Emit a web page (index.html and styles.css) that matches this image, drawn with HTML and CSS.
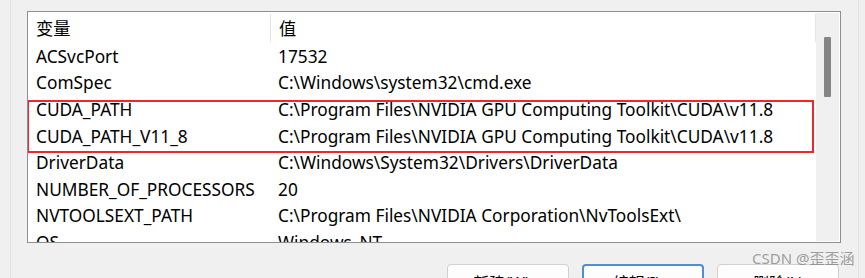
FILE: index.html
```html
<!DOCTYPE html>
<html>
<head>
    <title>环境变量</title>
    <link rel="stylesheet" href="styles.css">
</head>
<body>
    <div class="frame">
        <div class="listbox">
            <div class="table">
                <div class="header">
                    <div class="cell name">变量</div>
                    <div class="cell value">值</div>
                </div>
                <div class="row"><div class="cell name">ACSvcPort</div><div class="cell value">17532</div></div>
                <div class="row"><div class="cell name">ComSpec</div><div class="cell value">C:\Windows\system32\cmd.exe</div></div>
                <div class="row"><div class="cell name">CUDA_PATH</div><div class="cell value">C:\Program Files\NVIDIA GPU Computing Toolkit\CUDA\v11.8</div></div>
                <div class="row"><div class="cell name">CUDA_PATH_V11_8</div><div class="cell value">C:\Program Files\NVIDIA GPU Computing Toolkit\CUDA\v11.8</div></div>
                <div class="row"><div class="cell name">DriverData</div><div class="cell value">C:\Windows\System32\Drivers\DriverData</div></div>
                <div class="row"><div class="cell name">NUMBER_OF_PROCESSORS</div><div class="cell value">20</div></div>
                <div class="row"><div class="cell name">NVTOOLSEXT_PATH</div><div class="cell value">C:\Program Files\NVIDIA Corporation\NvToolsExt\</div></div>
                <div class="row"><div class="cell name">OS</div><div class="cell value">Windows_NT</div></div>
                <div class="highlight"></div>
            </div>
            <div class="scrollbar">
                <div class="thumb"></div>
            </div>
        </div>
        <div class="buttons">
            <button>新建(W)...</button>
            <button class="focused">编辑(I)...</button>
            <button>删除(L)</button>
        </div>
    </div>
    <div class="watermark">CSDN @歪歪涵</div>
</body>
</html>
```

FILE: styles.css
```css
body {
    margin: 0;
    height: 278px;
    overflow: hidden;
    background: #f0f0f0;
    font-family: 'Noto Sans', 'Noto Sans CJK SC', sans-serif;
    font-size: 17.3px;
    color: #000;
    position: relative;
}

.frame {
    margin-left: 10px;
    width: 849px;
    height: 278px;
    border-left: 1px solid #e2e2e2;
    border-right: 1px solid #e2e2e2;
    padding-left: 16px;
    padding-top: 11px;
    box-sizing: border-box;
    overflow: hidden;
}

.listbox {
    width: 814px;
    height: 232px;
    box-sizing: border-box;
    border: 1px solid #8c8f94;
    background: #fff;
    display: flex;
    overflow: hidden;
}

.table {
    flex: 1;
    position: relative;
    overflow: hidden;
}

.header, .row {
    display: grid;
    grid-template-columns: 242px 1fr;
    align-items: center;
    white-space: nowrap;
}

.header {
    height: 31px;
}

.header .value {
    height: 28px;
    border-left: 1px solid #e5e5e5;
    border-right: 1px solid #e5e5e5;
    display: flex;
    align-items: center;
}

.row {
    height: 26.6px;
}

.cell.name {
    padding-left: 8px;
}

.cell.value {
    padding-left: 8px;
}

.highlight {
    position: absolute;
    left: -1px;
    top: 88px;
    width: 783px;
    height: 49px;
    border: 2px solid #f0262b;
}

.scrollbar {
    width: 23px;
    margin: 1px 1px 1px 0;
    background: #f0f0f0;
    display: flex;
    justify-content: center;
}

.thumb {
    width: 7px;
    height: 60px;
    margin-top: 24px;
    background: #858585;
    border-radius: 1px;
}

.buttons {
    display: flex;
    justify-content: flex-end;
    gap: 13px;
    width: 812px;
    margin-top: 21px;
}

button {
    width: 122px;
    height: 32px;
    background: #fdfdfd;
    border: 1px solid #d0d0d0;
    border-radius: 4px;
    font-family: 'Noto Sans', 'Noto Sans CJK SC', sans-serif;
    font-size: 16px;
    padding-top: 4px;
    color: #000;
}

button.focused {
    border: 2px solid #4a8fdb;
}

.watermark {
    position: absolute;
    left: 752px;
    top: 247px;
    font-size: 15px;
    white-space: nowrap;
    color: rgba(120, 120, 120, 0.7);
}
```
